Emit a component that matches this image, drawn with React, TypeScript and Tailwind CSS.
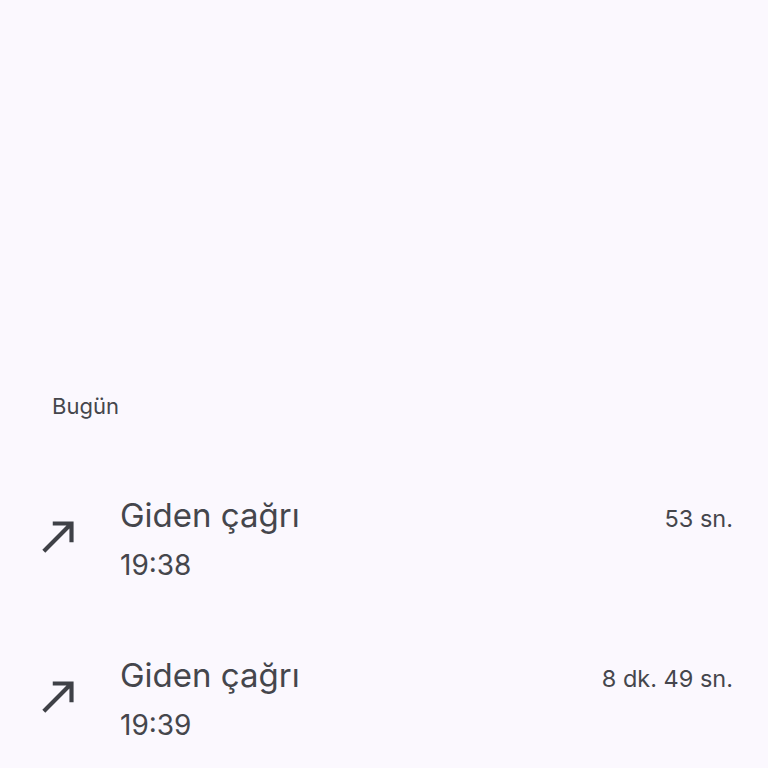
const CALLS = [
  { title: 'Giden çağrı', time: '19:38', duration: '53 sn.' },
  { title: 'Giden çağrı', time: '19:39', duration: '8 dk. 49 sn.' },
]

function CallMadeIcon() {
  return (
    <svg width="50" height="50" viewBox="0 0 24 24" fill="#3f4147">
      <path d="M9 5v2h6.59L4 18.59 5.41 20 17 8.41V15h2V5z" />
    </svg>
  )
}

export default function App() {
  return (
    <div className="w-[768px] h-[768px] overflow-hidden bg-[#fbf8fe] text-[#45464c] font-['Inter','Roboto',sans-serif]">
      <div className="pt-[392px] pl-[52px] text-[22px] leading-[28px]">Bugün</div>

      <div className="flex flex-col gap-[64px] mt-[73px]">
        {CALLS.map((c, i) => (
          <div key={i} className="flex items-center pl-[34px] pr-[35px]">
            <div className="w-[86px] flex mb-[10px]">
              <CallMadeIcon />
            </div>
            <div className="flex-1 flex flex-col">
              <div className="flex items-baseline justify-between">
                <span className="text-[33px] leading-[44px]">{c.title}</span>
                <span className="text-[23.5px] leading-[44px]">{c.duration}</span>
              </div>
              <span className="text-[28px] leading-[48px]">{c.time}</span>
            </div>
          </div>
        ))}
      </div>
    </div>
  )
}
